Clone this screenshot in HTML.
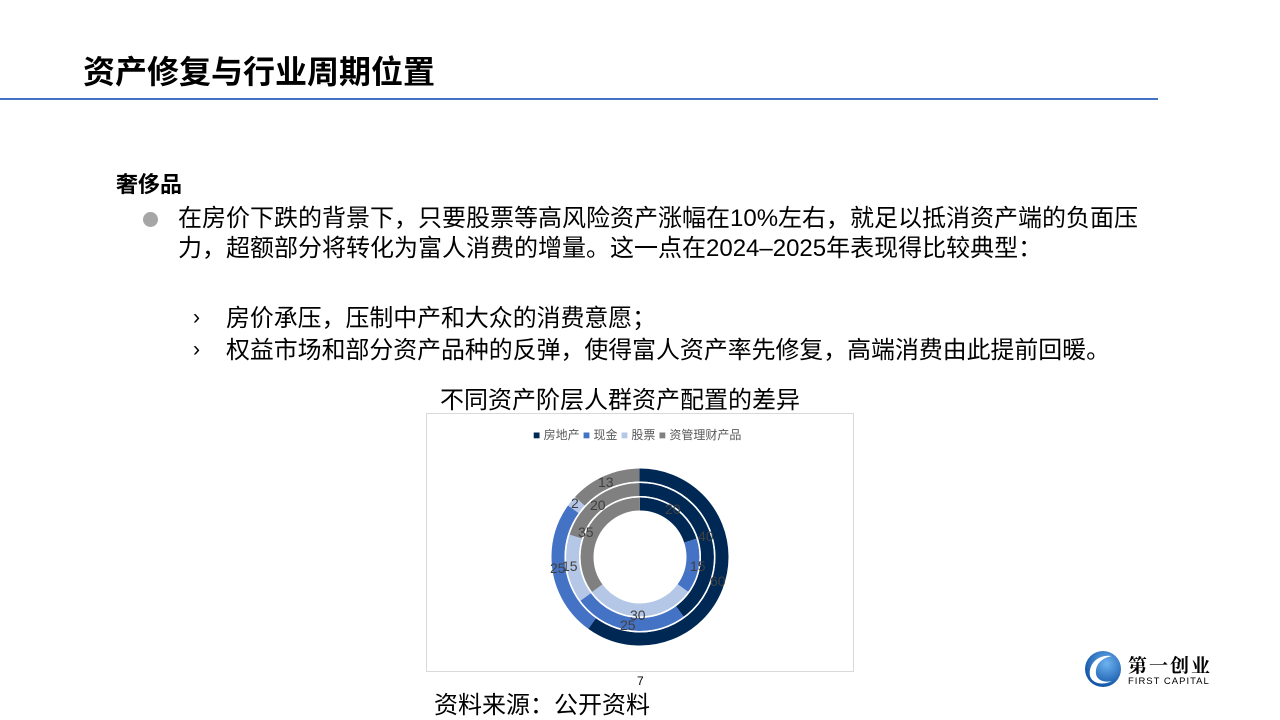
<!DOCTYPE html>
<html><head><meta charset="utf-8"><style>
body{margin:0;width:1280px;height:720px;background:#fff;position:relative;overflow:hidden;font-family:"Liberation Sans","Noto Sans CJK SC",sans-serif;color:#000}
.a{position:absolute;white-space:nowrap}
</style></head><body>
<div class="a" style="left:83px;top:47px;font-size:32px;font-weight:bold;">资产修复与行业周期位置</div>
<div class="a" style="left:0;top:98px;width:1158px;height:2px;background:#4472c4"></div>
<div class="a" style="left:116px;top:167px;font-size:22px;font-weight:bold;">奢侈品</div>
<div class="a" style="left:143px;top:212px;width:15px;height:15px;border-radius:50%;background:#a6a6a6"></div>
<div class="a" style="left:178px;top:204px;font-size:24px;line-height:30px;">在房价下跌的背景下，只要股票等高风险资产涨幅在10%左右，就足以抵消资产端的负面压<br>力，超额部分将转化为富人消费的增量。这一点在2024–2025年表现得比较典型：</div>
<div class="a" style="left:193px;top:302px;font-size:21px;line-height:32px;">›<br>›</div>
<div class="a" style="left:226px;top:303px;font-size:23.9px;line-height:32px;">房价承压，压制中产和大众的消费意愿；<br>权益市场和部分资产品种的反弹，使得富人资产率先修复，高端消费由此提前回暖。</div>
<div class="a" style="left:440px;top:380px;font-size:24px;">不同资产阶层人群资产配置的差异</div>
<div class="a" style="left:426px;top:413px;width:426px;height:257px;border:1px solid #d9d9d9"></div>
<div class="a" style="left:533px;top:426px;font-size:12px;color:#595959">
<span style="color:#002855">■</span> 房地产 <span style="color:#4472c4">■</span> 现金 <span style="color:#b4c7e7">■</span> 股票 <span style="color:#808080">■</span> 资管理财产品</div>
<svg class="a" style="left:540px;top:457px" width="200" height="200" viewBox="0 0 200 200">
<g transform="rotate(-90 100 100)" fill="none">
<circle cx="100" cy="100" r="82" stroke-width="13" pathLength="100" stroke="#002855" stroke-dasharray="60 40"/>
<circle cx="100" cy="100" r="82" stroke-width="13" pathLength="100" stroke="#4472c4" stroke-dasharray="0 60 25 15"/>
<circle cx="100" cy="100" r="82" stroke-width="13" pathLength="100" stroke="#b4c7e7" stroke-dasharray="0 85 2 13"/>
<circle cx="100" cy="100" r="82" stroke-width="13" pathLength="100" stroke="#808080" stroke-dasharray="0 87 13 0"/>
<circle cx="100" cy="100" r="67.5" stroke-width="13" pathLength="100" stroke="#002855" stroke-dasharray="40 60"/>
<circle cx="100" cy="100" r="67.5" stroke-width="13" pathLength="100" stroke="#4472c4" stroke-dasharray="0 40 25 35"/>
<circle cx="100" cy="100" r="67.5" stroke-width="13" pathLength="100" stroke="#b4c7e7" stroke-dasharray="0 65 15 20"/>
<circle cx="100" cy="100" r="67.5" stroke-width="13" pathLength="100" stroke="#808080" stroke-dasharray="0 80 20 0"/>
<circle cx="100" cy="100" r="53" stroke-width="13" pathLength="100" stroke="#002855" stroke-dasharray="20 80"/>
<circle cx="100" cy="100" r="53" stroke-width="13" pathLength="100" stroke="#4472c4" stroke-dasharray="0 20 15 65"/>
<circle cx="100" cy="100" r="53" stroke-width="13" pathLength="100" stroke="#b4c7e7" stroke-dasharray="0 35 30 35"/>
<circle cx="100" cy="100" r="53" stroke-width="13" pathLength="100" stroke="#808080" stroke-dasharray="0 65 35 0"/>
</g>
<g stroke="#fff" stroke-width="1.5" fill="none"><circle cx="100" cy="100" r="74.7"/><circle cx="100" cy="100" r="60.2"/></g>
<g font-size="14" fill="#404040" font-family="Liberation Sans,sans-serif">
<text x="125" y="57">20</text><text x="158" y="84">40</text><text x="150" y="114">15</text><text x="170" y="129">60</text>
<text x="90" y="163">30</text><text x="80" y="173">25</text><text x="10" y="116">25</text><text x="22" y="114">15</text>
<text x="38" y="80">35</text><text x="50" y="53">20</text><text x="58" y="30">13</text><text x="31" y="51">2</text>
</g></svg>
<div class="a" style="left:637px;top:674px;font-size:12px;">7</div>
<div class="a" style="left:434px;top:685px;font-size:24px;">资料来源：公开资料</div>
<svg class="a" style="left:1084px;top:650px" width="38" height="38" viewBox="0 0 38 38">
<defs><radialGradient id="g" cx="0.6" cy="0.35" r="0.7"><stop offset="0" stop-color="#6fb3f0"/><stop offset="1" stop-color="#0b4ea2"/></radialGradient></defs>
<circle cx="19" cy="19" r="18" fill="url(#g)"/>
<path d="M6 26 C4 14 14 4 28 6 C18 8 11 14 12 24 C13 30 20 33 28 31 C18 36 8 33 6 26Z" fill="#fff"/>
</svg>
<div class="a" style="left:1128px;top:651px;font-size:19px;font-weight:bold;letter-spacing:2px;font-family:'Noto Serif CJK SC',serif">第一创业</div>
<div class="a" style="left:1128px;top:676px;font-size:9.5px;letter-spacing:1px;">FIRST CAPITAL</div>
</body></html>
